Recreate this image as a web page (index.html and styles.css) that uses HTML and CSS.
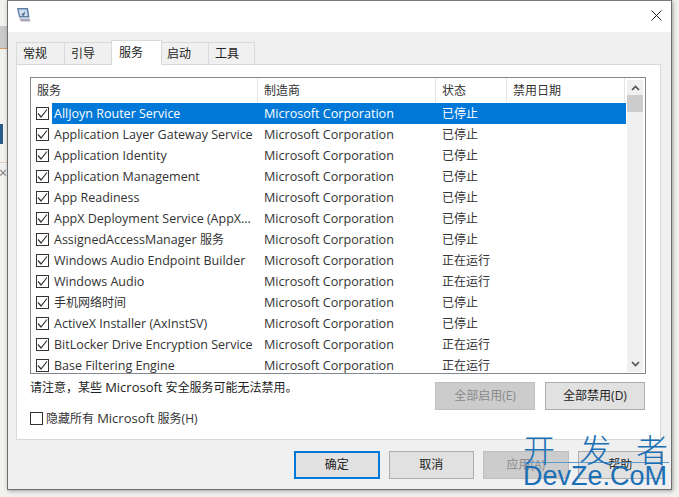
FILE: index.html
```html
<!DOCTYPE html>
<html lang="zh">
<head>
<meta charset="utf-8">
<title>系统配置</title>
<link rel="stylesheet" href="styles.css">
</head>
<body>
<div class="desktop">
  <div class="bg-a"></div><div class="bg-c"></div><div class="bg-b"></div><div class="bg-d"></div><div class="bg-x">×</div>
  <div class="window">
    <div class="titlebar">
      <svg class="app-icon" width="16" height="16" viewBox="0 0 16 16"><path d="M1 1h11l1.500 9.500H3z" fill="#5f7fa8"/><path d="M2.800 2.500h7.900l1 6.500H4z" fill="#cfe0f2"/><path d="M5 8l4.500-4-1.500 5z" fill="#5a6f8f"/><path d="M3 11.500h10.500l1 3H5z" fill="#a9a9bb"/></svg>
      <svg class="close" width="11" height="11" viewBox="0 0 11 11"><path d="M.5.5l10 10M10.500.5l-10 10" stroke="#222" stroke-width="1" fill="none"/></svg>
    </div>
    <div class="body">
      <div class="tabs">
        <div class="tab">常规</div>
        <div class="tab">引导</div>
        <div class="tab active">服务</div>
        <div class="tab">启动</div>
        <div class="tab">工具</div>
      </div>
      <div class="panel">
        <div class="listbox">
          <div class="list">
            <div class="head">
              <div class="h c1">服务</div><div class="h c2">制造商</div><div class="h c3">状态</div><div class="h c4">禁用日期</div>
            </div>
            <div class="row sel"><span class="check"><svg width="11" height="10" viewBox="0 0 11 10"><path d="M1 4.500l3 3.500 6-7.500" class="tick"/></svg></span><div class="cell n">AllJoyn Router Service</div><div class="cell m">Microsoft Corporation</div><div class="cell s">已停止</div></div>
            <div class="row"><span class="check"><svg width="11" height="10" viewBox="0 0 11 10"><path d="M1 4.500l3 3.500 6-7.500" class="tick"/></svg></span><div class="cell n">Application Layer Gateway Service</div><div class="cell m">Microsoft Corporation</div><div class="cell s">已停止</div></div>
            <div class="row"><span class="check"><svg width="11" height="10" viewBox="0 0 11 10"><path d="M1 4.500l3 3.500 6-7.500" class="tick"/></svg></span><div class="cell n">Application Identity</div><div class="cell m">Microsoft Corporation</div><div class="cell s">已停止</div></div>
            <div class="row"><span class="check"><svg width="11" height="10" viewBox="0 0 11 10"><path d="M1 4.500l3 3.500 6-7.500" class="tick"/></svg></span><div class="cell n">Application Management</div><div class="cell m">Microsoft Corporation</div><div class="cell s">已停止</div></div>
            <div class="row"><span class="check"><svg width="11" height="10" viewBox="0 0 11 10"><path d="M1 4.500l3 3.500 6-7.500" class="tick"/></svg></span><div class="cell n">App Readiness</div><div class="cell m">Microsoft Corporation</div><div class="cell s">已停止</div></div>
            <div class="row"><span class="check"><svg width="11" height="10" viewBox="0 0 11 10"><path d="M1 4.500l3 3.500 6-7.500" class="tick"/></svg></span><div class="cell n">AppX Deployment Service (AppX...</div><div class="cell m">Microsoft Corporation</div><div class="cell s">已停止</div></div>
            <div class="row"><span class="check"><svg width="11" height="10" viewBox="0 0 11 10"><path d="M1 4.500l3 3.500 6-7.500" class="tick"/></svg></span><div class="cell n">AssignedAccessManager <span class="zh">服务</span></div><div class="cell m">Microsoft Corporation</div><div class="cell s">已停止</div></div>
            <div class="row"><span class="check"><svg width="11" height="10" viewBox="0 0 11 10"><path d="M1 4.500l3 3.500 6-7.500" class="tick"/></svg></span><div class="cell n">Windows Audio Endpoint Builder</div><div class="cell m">Microsoft Corporation</div><div class="cell s">正在运行</div></div>
            <div class="row"><span class="check"><svg width="11" height="10" viewBox="0 0 11 10"><path d="M1 4.500l3 3.500 6-7.500" class="tick"/></svg></span><div class="cell n">Windows Audio</div><div class="cell m">Microsoft Corporation</div><div class="cell s">正在运行</div></div>
            <div class="row"><span class="check"><svg width="11" height="10" viewBox="0 0 11 10"><path d="M1 4.500l3 3.500 6-7.500" class="tick"/></svg></span><div class="cell n"><span class="zh">手机网络时间</span></div><div class="cell m">Microsoft Corporation</div><div class="cell s">已停止</div></div>
            <div class="row"><span class="check"><svg width="11" height="10" viewBox="0 0 11 10"><path d="M1 4.500l3 3.500 6-7.500" class="tick"/></svg></span><div class="cell n">ActiveX Installer (AxInstSV)</div><div class="cell m">Microsoft Corporation</div><div class="cell s">已停止</div></div>
            <div class="row"><span class="check"><svg width="11" height="10" viewBox="0 0 11 10"><path d="M1 4.500l3 3.500 6-7.500" class="tick"/></svg></span><div class="cell n">BitLocker Drive Encryption Service</div><div class="cell m">Microsoft Corporation</div><div class="cell s">正在运行</div></div>
            <div class="row"><span class="check"><svg width="11" height="10" viewBox="0 0 11 10"><path d="M1 4.500l3 3.500 6-7.500" class="tick"/></svg></span><div class="cell n">Base Filtering Engine</div><div class="cell m">Microsoft Corporation</div><div class="cell s">正在运行</div></div>
          </div>
          <div class="scrollbar">
            <svg class="arrow" width="9" height="6" viewBox="0 0 9 6"><path d="M1 5l3.500-3.500L8 5" fill="none" stroke="#505050" stroke-width="1.600"/></svg>
            <div class="thumb"></div>
            <div class="track"></div>
            <svg class="arrow" width="9" height="6" viewBox="0 0 9 6"><path d="M1 1l3.500 3.500L8 1" fill="none" stroke="#505050" stroke-width="1.600"/></svg>
          </div>
        </div>
        <div class="notes">
          <div class="note">请注意，某些 <span class="en">Microsoft</span> 安全服务可能无法禁用。</div>
          <div class="actions">
            <div class="btn wide disabled">全部启用(E)</div>
            <div class="btn wide">全部禁用(D)</div>
          </div>
        </div>
        <div class="hide"><span class="box"></span><span>隐藏所有 <span class="en">Microsoft</span> 服务(H)</span></div>
      </div>
      <div class="footer">
        <div class="btn default">确定</div>
        <div class="btn">取消</div>
        <div class="btn disabled">应用(A)</div>
        <div class="btn">帮助</div>
      </div>
    </div>
  </div>
  <div class="mark"><div class="mark-cn"><span>开</span><span>发</span><span>者</span></div><div class="mark-en">DevZe.CoM</div></div>
</div>
</body>
</html>
```

FILE: styles.css
```css
* { box-sizing: border-box; }
html, body { margin: 0; padding: 0; }
body { width: 679px; height: 497px; overflow: hidden; font-family: "Open Sans", "Noto Sans CJK SC", sans-serif; font-size: 12px; color: #222; }
.en { font-size: 13px; }
.zh { font-size: 12px; }
.desktop { position: relative; width: 679px; height: 497px; background: #f1f1ef; padding-left: 7px; overflow: hidden; }
.bg-a { position: absolute; left: 0; top: 26px; width: 8px; height: 22px; background: #c9c9c9; }
.bg-c { position: absolute; left: 0; top: 48px; width: 8px; height: 1px; background: #d99a6c; }
.bg-b { position: absolute; left: 0; top: 124px; width: 3px; height: 20px; background: #2a5a88; }
.bg-d { position: absolute; left: 0; top: 162px; width: 8px; height: 1px; background: #e3d2b8; }
.bg-x { position: absolute; left: -1px; top: 165px; font-size: 14px; line-height: 16px; color: #777; }
.window { position: relative; width: 665px; height: 490px; background: #f0f0f0; border: 1px solid #6e6e6e; border-top-color: #7a7a7a; box-shadow: 1px 1px 4px rgba(0,0,0,.35); display: flex; flex-direction: column; }
.titlebar { height: 31px; background: #fff; display: flex; align-items: center; justify-content: space-between; padding: 0 9px 3px 8px; flex: none; }
.body { flex: 1; display: flex; flex-direction: column; padding: 9px 10px 0 8px; }
.tabs { display: flex; height: 23px; align-items: flex-end; position: relative; z-index: 1; flex: none; }
.tab { width: 49px; height: 22px; margin-right: -1px; padding-left: 6px; border: 1px solid #d9d9d9; border-bottom: 0; background: #f0f0f0; line-height: 21px; }
.tab:last-child { width: 47px; }
.tab.active { width: 51px; height: 25px; margin: 0 -2px -1px -1px; padding-left: 7px; background: #fff; position: relative; z-index: 2; line-height: 24px; }
.panel { height: 376px; background: #fff; border: 1px solid #d9d9d9; padding: 12px 14px 0 13px; flex: none; }
.listbox { width: 616px; height: 297px; border: 1px solid #828790; display: flex; overflow: hidden; background: #fff; }
.list { width: 595px; flex: none; }
.head { display: flex; height: 25px; }
.h { line-height: 26px; padding-left: 6px; border-right: 1px solid #e5e5e5; height: 24px; color: #333; }
.c1 { width: 227px; }
.c2 { width: 178px; }
.c3 { width: 71px; }
.c4 { width: 118px; }
.row { display: flex; align-items: center; height: 21px; position: relative; color: #333; white-space: nowrap; }
.check { position: absolute; left: 5px; top: 4px; width: 13px; height: 13px; background: #fff; border: 1px solid #333; display: flex; align-items: center; justify-content: center; }
.tick { fill: none; stroke: #333; stroke-width: 1.200; }
.cell { line-height: 21px; }
.n { width: 227px; padding-left: 23px; font-size: 12.500px; }
.m { width: 178px; padding-left: 6px; font-size: 12.600px; }
.s { width: 71px; padding-left: 6px; }
.row.sel::before { content: ""; position: absolute; left: 21px; right: 0; top: 0; bottom: 0; background: #0078d7; }
.row.sel .cell { position: relative; color: #fff; }
.scrollbar { width: 16px; margin: 2px 2px 1px 1px; background: #f0f0f0; display: flex; flex-direction: column; align-items: center; padding-top: 5px; padding-bottom: 5px; }
.arrow { flex: none; }
.thumb { flex: none; width: 100%; height: 17px; background: #cdcdcd; margin-top: 4px; }
.track { flex: 1; }
.notes { display: flex; justify-content: space-between; height: 36px; }
.note { padding-top: 4px; line-height: 18px; }
.actions { display: flex; gap: 10px; padding-top: 8px; margin-right: 1px; }
.btn { width: 85.500px; height: 28px; background: #e1e1e1; border: 1px solid #adadad; text-align: center; line-height: 26px; color: #222; }
.btn.wide { width: 100px; }
.btn.disabled { background: #cccccc; border-color: #bfbfbf; color: #8a8a8a; }
.btn.default { border: 2px solid #0078d7; line-height: 24px; }
.hide { display: flex; align-items: center; gap: 3px; height: 16px; color: #333; }
.box { width: 13px; height: 13px; border: 1px solid #333; background: #fff; }
.footer { display: flex; gap: 9px; justify-content: flex-end; padding-top: 11px; margin-right: -2px; }
.mark { position: absolute; left: 523px; top: 428px; width: 146px; color: #1a6fb5; pointer-events: none; }
.mark-cn { display: flex; justify-content: space-between; height: 35px; font-size: 32px; line-height: 40px; font-family: "Noto Sans CJK SC", sans-serif; font-weight: 300; padding-right: 1px; border-bottom: 1px solid #5a9ccd; }
.mark-en { font-size: 27px; line-height: 27px; font-family: "Liberation Sans", sans-serif; white-space: nowrap; }
```
